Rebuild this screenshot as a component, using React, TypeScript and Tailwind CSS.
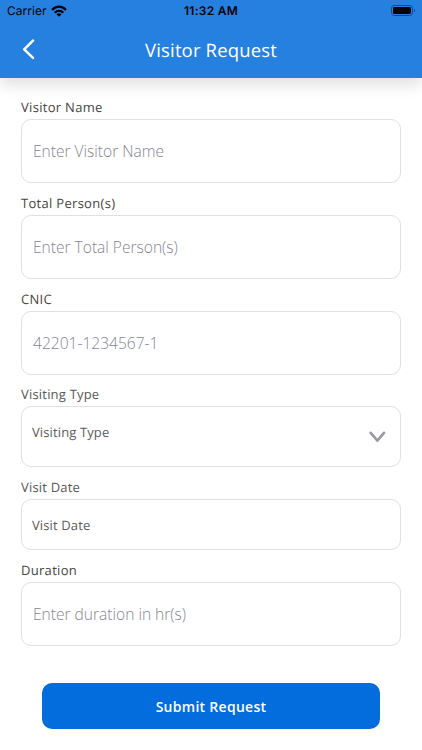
import type { ReactNode } from "react";

function StatusBar() {
  return (
    <div className="relative flex h-[22px] items-center justify-between pl-[7px] pr-[6px] text-black">
      <div className="flex items-center gap-[4px]">
        <span className="w-[40px] whitespace-nowrap font-['Inter'] text-[12px] leading-[22px] tracking-[0.05px]">Carrier</span>
        <svg width="16" height="12" viewBox="0 0 16 12" fill="none" stroke="#000" strokeWidth="2.3" className="-mt-px">
          <path d="M1.1 5C5 0.6 11 0.6 14.9 5" />
          <path d="M3.7 7.7C6.2 5.2 9.8 5.2 12.3 7.7" />
          <path d="M8 11.8L5.4 9.2C7 7.9 9 7.9 10.6 9.2Z" fill="#000" stroke="none" />
        </svg>
      </div>
      <span className="absolute left-[184px] top-0 font-['Inter'] text-[12px] font-semibold leading-[22px] tracking-[0.27px]">
        11:32 AM
      </span>
      <svg width="25" height="11" viewBox="0 0 25 11" fill="none" className="-mt-px">
        <rect x="0.5" y="0.5" width="21" height="10" rx="2.8" stroke="#134a88" />
        <rect x="2" y="2" width="18" height="7" rx="1.4" fill="#000" />
        <path d="M23 3.8C24.4 4.3 24.4 6.7 23 7.2Z" fill="#134a88" />
      </svg>
    </div>
  );
}

type FieldProps = { label: string; className?: string; soft?: boolean; children: ReactNode };

function Field({ label, className = "", soft = false, children }: FieldProps) {
  const tone = soft ? "text-[#585858] tracking-[0.2px]" : "text-[#454545] tracking-[0.3px]";
  return (
    <div className={className}>
      <div className={`h-6 text-[13px] leading-6 ${tone}`}>{label}</div>
      {children}
    </div>
  );
}

const box = "flex w-full items-center rounded-[10px] border border-[#e0e0e0] bg-white";
const input =
  "px-[11px] text-[15.6px] font-light tracking-[-0.02px] text-[#5c5c66] outline-none placeholder:text-[#85858f] placeholder:opacity-100";

export default function App() {
  return (
    <div className="h-[750px] w-[422px] overflow-hidden bg-white font-['Open_Sans',sans-serif] [text-rendering:geometricPrecision]">
      <header className="h-[78px] bg-[#2680e0] shadow-[0_7px_14px_rgba(0,0,0,0.12)]">
        <StatusBar />
        <div className="relative flex h-[56px] items-center justify-center">
          <button aria-label="Back" className="absolute left-[22px] top-[17px]">
            <svg width="14" height="21" viewBox="0 0 14 21" fill="none" stroke="#fff" strokeWidth="2.5" strokeLinecap="round" strokeLinejoin="round">
              <path d="M11 1.6L2.2 10.3L11 18.8" />
            </svg>
          </button>
          <h1 className="pt-[2px] text-[18.5px] leading-[56px] tracking-[0.15px] text-white">Visitor Request</h1>
        </div>
      </header>
      <form className="px-[21px] pt-[17px]">
        <Field label="Visitor Name">
          <input placeholder="Enter Visitor Name" className={`${box} ${input} h-[64px]`} />
        </Field>
        <Field label="Total Person(s)" className="mt-[8px]">
          <input placeholder="Enter Total Person(s)" className={`${box} ${input} h-[64px]`} />
        </Field>
        <Field label="CNIC" className="mt-[8px]">
          <input placeholder="42201-1234567-1" className={`${box} ${input} h-[64px]`} />
        </Field>
        <Field label="Visiting Type" className="mt-[7px]" soft>
          <div className={`${box} h-[61px] justify-between pl-[10px] pr-[14px]`}>
            <span className="pb-[9px] text-[13px] leading-[18px] tracking-[0.12px] text-[#5c5c5c]">Visiting Type</span>
            <svg width="18" height="12" viewBox="0 0 18 12" fill="none" stroke="#9999a1" strokeWidth="2.6" strokeLinecap="round" strokeLinejoin="round">
              <path d="M2.7 1.8L9.4 9.6L16 1.8" />
            </svg>
          </div>
        </Field>
        <Field label="Visit Date" className="mt-[8px]" soft>
          <div className={`${box} h-[51px] px-[10px]`}>
            <span className="text-[13px] leading-[18px] tracking-[0.12px] text-[#5c5c5c]">Visit Date</span>
          </div>
        </Field>
        <Field label="Duration" className="mt-[8px]">
          <input placeholder="Enter duration in hr(s)" className={`${box} ${input} h-[64px]`} />
        </Field>
        <button
          type="button"
          className="mx-auto mt-[37px] block h-[46px] w-[338px] rounded-[10px] bg-[#046ddd] text-[14px] font-semibold tracking-[0.28px] text-white"
        >
          Submit Request
        </button>
      </form>
    </div>
  );
}
